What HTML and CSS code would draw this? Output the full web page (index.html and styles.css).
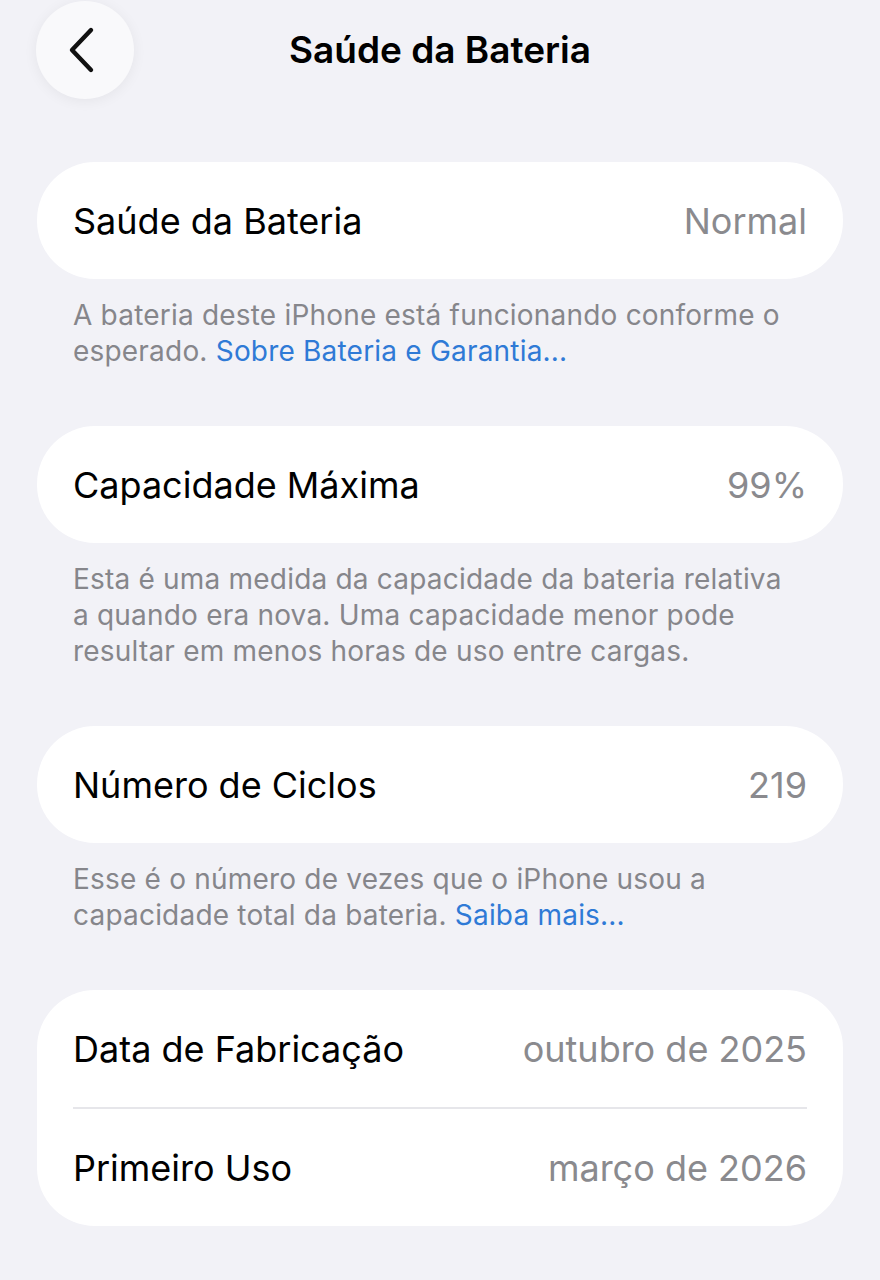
FILE: index.html
```html
<!DOCTYPE html>
<html lang="pt-BR">
<head>
<meta charset="utf-8">
<title>Saúde da Bateria</title>
<link rel="stylesheet" href="styles.css">
</head>
<body>
<header class="nav">
  <div class="nav-left">
    <button class="back" aria-label="Voltar">
      <svg width="30" height="48" viewBox="0 0 30 48" aria-hidden="true">
        <path d="M24 4 L5 24 L24 44" fill="none" stroke="#111" stroke-width="4.4" stroke-linecap="round" stroke-linejoin="round"/>
      </svg>
    </button>
  </div>
  <h1 class="title">Saúde da Bateria</h1>
  <div class="nav-right"></div>
</header>

<main class="content">
  <section class="group">
    <div class="card">
      <div class="row"><span class="label">Saúde da Bateria</span><span class="value">Normal</span></div>
    </div>
    <p class="footer">A bateria deste iPhone está funcionando conforme o esperado. <a class="link">Sobre Bateria e Garantia...</a></p>
  </section>

  <section class="group">
    <div class="card">
      <div class="row"><span class="label">Capacidade Máxima</span><span class="value">99%</span></div>
    </div>
    <p class="footer">Esta é uma medida da capacidade da bateria relativa a quando era nova. Uma capacidade menor pode resultar em menos horas de uso entre cargas.</p>
  </section>

  <section class="group">
    <div class="card">
      <div class="row"><span class="label">Número de Ciclos</span><span class="value">219</span></div>
    </div>
    <p class="footer">Esse é o número de vezes que o iPhone usou a capacidade total da bateria. <a class="link">Saiba mais...</a></p>
  </section>

  <section class="group">
    <div class="card">
      <div class="row"><span class="label">Data de Fabricação</span><span class="value">outubro de 2025</span></div>
      <div class="sep"></div>
      <div class="row"><span class="label">Primeiro Uso</span><span class="value">março de 2026</span></div>
    </div>
  </section>
</main>
</body>
</html>
```

FILE: styles.css
```css
* { box-sizing: border-box; }

html, body {
  margin: 0;
  padding: 0;
  background: #f2f2f7;
  font-family: Inter, "Noto Sans", "Liberation Sans", sans-serif;
  color: #000;
}

.nav {
  display: grid;
  grid-template-columns: 1fr auto 1fr;
  align-items: center;
  height: 100px;
}

.nav-left {
  padding-left: 36px;
  display: flex;
  align-items: center;
}

.back {
  width: 98px;
  height: 98px;
  border-radius: 50%;
  border: none;
  background: #f9f9fb;
  box-shadow: 0 2px 14px rgba(0, 0, 0, 0.06);
  display: flex;
  align-items: center;
  justify-content: center;
  padding: 0 6px 0 0;
}

.title {
  margin: 0;
  font-size: 37px;
  font-weight: 600;
  line-height: 44px;
  color: #000;
}

.content {
  padding: 62px 37px 0;
  display: flex;
  flex-direction: column;
  gap: 57px;
}

.card {
  background: #fff;
  border-radius: 58px;
  padding: 0 36px;
}

.row {
  height: 117px;
  display: flex;
  align-items: center;
  justify-content: space-between;
}

.label {
  font-size: 36px;
  font-weight: 400;
  line-height: 44px;
  color: #000;
}

.value {
  font-size: 36px;
  line-height: 44px;
  color: #8a8a8e;
}

.sep {
  height: 2px;
  background: #e6e6ea;
}

.footer {
  margin: 0;
  padding: 18px 50px 0 36px;
  font-size: 28px;
  line-height: 36px;
  letter-spacing: 0.2px;
  color: #86868b;
}

.link {
  color: #2f7ad6;
  text-decoration: none;
}
```
